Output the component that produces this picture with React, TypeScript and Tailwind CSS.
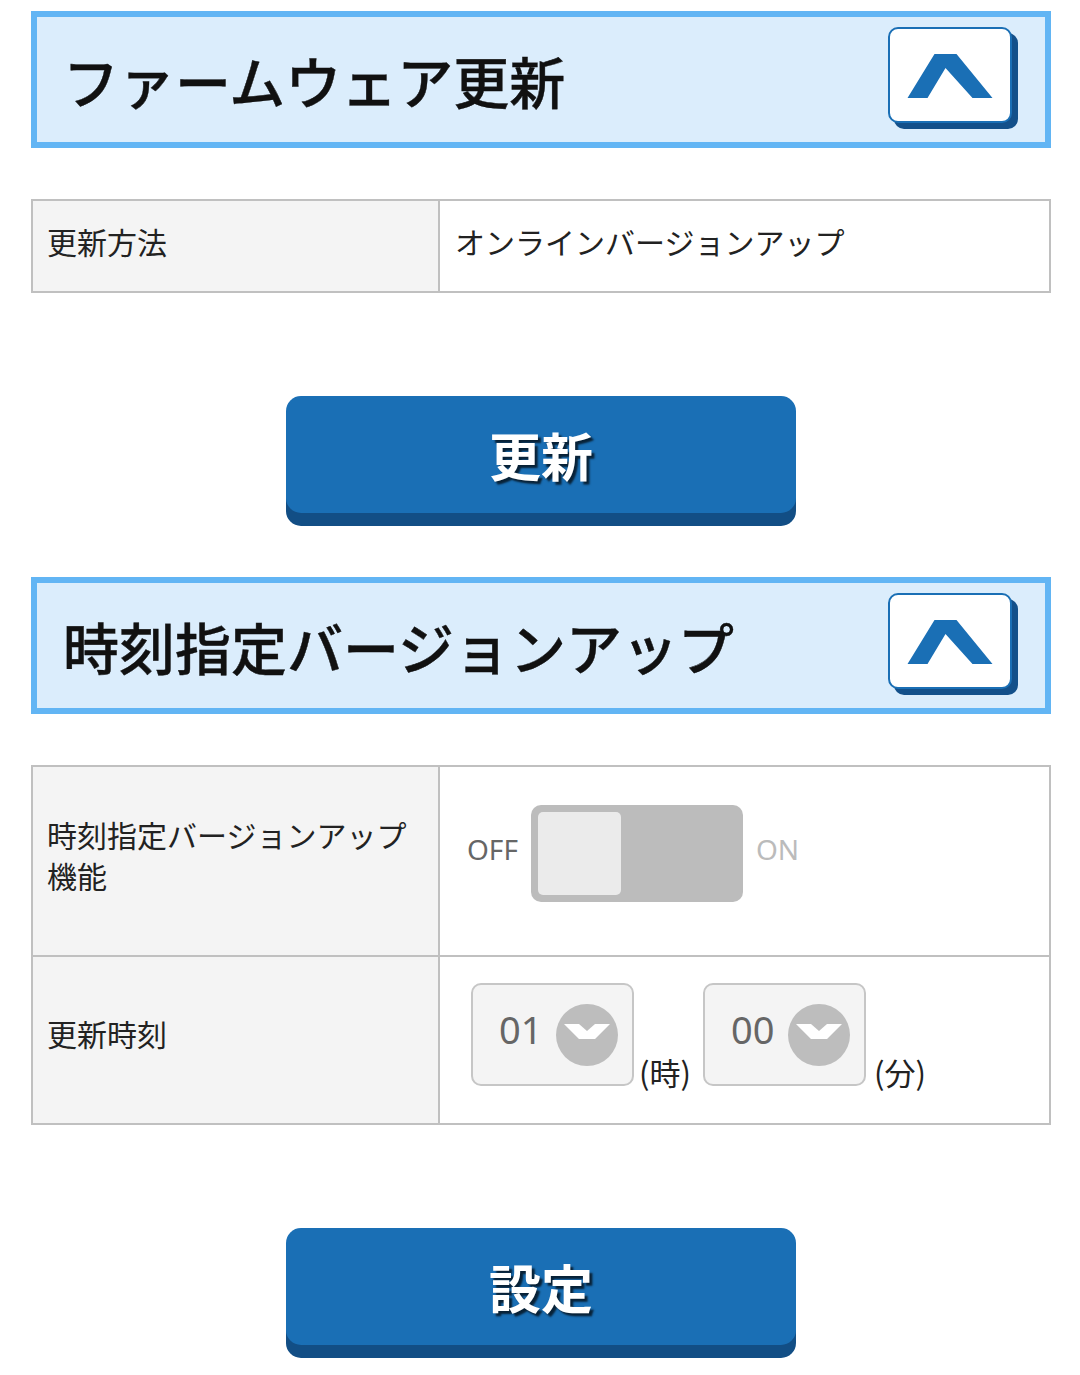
import React from 'react';

const jp = "font-['Noto_Sans_CJK_JP','Noto_Sans',sans-serif]";
const latin = "font-['Noto_Sans','Noto_Sans_CJK_JP',sans-serif]";

// Collapse button in the section header
const CollapseButton = () => (
    <button
        className="mb-[9px] w-[124px] h-[96px] rounded-[10px] border-2 border-[#1a6fb5] bg-white shadow-[6px_6px_0_#13508a] flex items-center justify-center"
        aria-label="Collapse"
    >
        <svg width="124" height="96" viewBox="0 0 124 96" className="-m-[2px]">
            <polygon points="20,71 47,27 69,27 105,71 85,71 58,41 40,71" fill="#1a6fb5" transform="translate(-0.5,0)" />
        </svg>
    </button>
);

const SectionHeader = ({ title }: { title: string }) => (
    <div className="h-[137px] border-[6px] border-[#62b5f4] bg-[#dbedfc] flex items-center justify-between pl-[26px] pr-[33px]">
        <h2 className={`${jp} text-[56px] font-medium leading-none text-[#111] [-webkit-text-stroke:0.4px_#111]`}>{title}</h2>
        <CollapseButton />
    </div>
);

const BigButton = ({ label }: { label: string }) => (
    <div className="flex justify-center">
        <button
            className={`${jp} w-[510px] h-[117px] rounded-[15px] bg-[#1a6fb5] shadow-[0_13px_0_#124e85] text-white text-[52px] font-bold [text-shadow:3px_3px_2px_rgba(0,0,0,0.7)]`}
        >
            {label}
        </button>
    </div>
);

const Select = ({ value }: { value: string }) => (
    <div className="w-[163px] h-[103px] rounded-[10px] border-2 border-[#c6c6c6] bg-[#f4f4f4] flex items-center pl-[26px] gap-[14px]">
        <span className={`${latin} mb-[11px] text-[38px] leading-none text-[#666]`}>{value}</span>
        <svg width="62" height="62" viewBox="0 0 62 62">
            <circle cx="31" cy="31" r="31" fill="#bdbdbd" />
            <polygon points="8,20 23,20 31,27 39,20 54,20 39,35 23,35" fill="#fff" />
        </svg>
    </div>
);

export default function App() {
    return (
        <div className={`${jp} w-[1080px] h-[1375px] bg-white pt-[11px] pl-[31px] pr-[29px]`}>
            <SectionHeader title="ファームウェア更新" />

            {/* Update method */}
            <div className="mt-[51px] border-2 border-[#c0c0c0] grid grid-cols-[407px_1fr] h-[94px]">
                <div className="bg-[#f4f4f4] border-r-2 border-[#c0c0c0] flex items-center pl-[14px] pb-[10px] text-[30px] text-[#222]">
                    更新方法
                </div>
                <div className="flex items-center pl-[15px] pb-[10px] text-[30px] text-[#222]">
                    オンラインバージョンアップ
                </div>
            </div>

            <div className="mt-[103px]">
                <BigButton label="更新" />
            </div>

            <div className="mt-[64px]">
                <SectionHeader title="時刻指定バージョンアップ" />
            </div>

            {/* Scheduled update */}
            <div className="mt-[51px] border-2 border-[#c0c0c0] grid grid-cols-[407px_1fr]">
                <div className="h-[188px] bg-[#f4f4f4] border-r-2 border-[#c0c0c0] flex items-center pl-[14px] pb-[12px] text-[30px] leading-[41px] text-[#222]">
                    <span>時刻指定バージョンアップ<br />機能</span>
                </div>
                <div className="h-[188px] flex items-center pl-[27px] pb-[16px] gap-[13px]">
                    <span className={`${latin} mb-[8px] text-[28px] text-[#666]`}>OFF</span>
                    <div className="w-[212px] h-[97px] rounded-[10px] bg-[#bcbcbc] p-[7px]">
                        <div className="w-[83px] h-[83px] rounded-[5px] bg-[#ebebeb]" />
                    </div>
                    <span className={`${latin} mb-[8px] text-[28px] text-[#bbb]`}>ON</span>
                </div>

                <div className="h-[168px] border-t-2 border-r-2 border-[#c0c0c0] bg-[#f4f4f4] flex items-center pl-[14px] pb-[14px] text-[30px] text-[#222]">
                    更新時刻
                </div>
                <div className="h-[168px] border-t-2 border-[#c0c0c0] flex items-center pl-[31px] pb-[11px]">
                    <div className="flex items-end">
                        <Select value="01" />
                        <span className="ml-[5px] text-[31px] leading-[1.1] text-[#222] -mb-[3px]">(時)</span>
                        <div className="ml-[12px]">
                            <Select value="00" />
                        </div>
                        <span className="ml-[8px] text-[31px] leading-[1.1] text-[#222] -mb-[3px]">(分)</span>
                    </div>
                </div>
            </div>

            <div className="mt-[103px]">
                <BigButton label="設定" />
            </div>
        </div>
    );
}
